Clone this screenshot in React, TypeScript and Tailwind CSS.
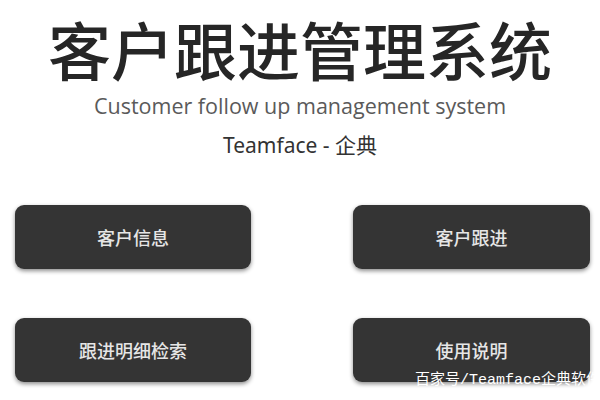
const cjk = "font-['Noto_Sans_CJK_SC',sans-serif]";

const buttons = ["客户信息", "客户跟进", "跟进明细检索", "使用说明"];

export default function App() {
  return (
    <div className="relative w-[600px] h-[400px] overflow-hidden bg-white">
      <div className="flex flex-col items-center">
        <h1
          className={`mt-[16px] text-[63px] leading-none font-medium text-[#262626] ${cjk}`}
        >
          客户跟进管理系统
        </h1>
        <p className="mt-[14px] text-[21.5px] leading-[26px] text-[#5a5a5a] font-['Open_Sans',sans-serif]">
          Customer follow up management system
        </p>
        <p className="mt-[14px] text-[21px] leading-[25px] text-[#333] font-['Noto_Sans','Noto_Sans_CJK_SC',sans-serif]">
          Teamface - 企典
        </p>
      </div>

      <div className="mt-[47px] pl-[15px] grid grid-cols-[236px_237px] gap-x-[102px] gap-y-[49px]">
        {buttons.map((label) => (
          <button
            key={label}
            className={`h-[64px] rounded-[9px] bg-[#343434] text-[18px] font-medium text-[#e6e6e6] shadow-[0_2px_4px_rgba(0,0,0,0.45)] ${cjk}`}
          >
            {label}
          </button>
        ))}
      </div>

      {/* watermark */}
      <div className="absolute left-[415px] top-[371px] whitespace-nowrap text-[15px] leading-[20px] text-white font-['Liberation_Mono','Noto_Sans_CJK_SC',monospace]">
        百家号/Teamface企典软件
      </div>
    </div>
  );
}
